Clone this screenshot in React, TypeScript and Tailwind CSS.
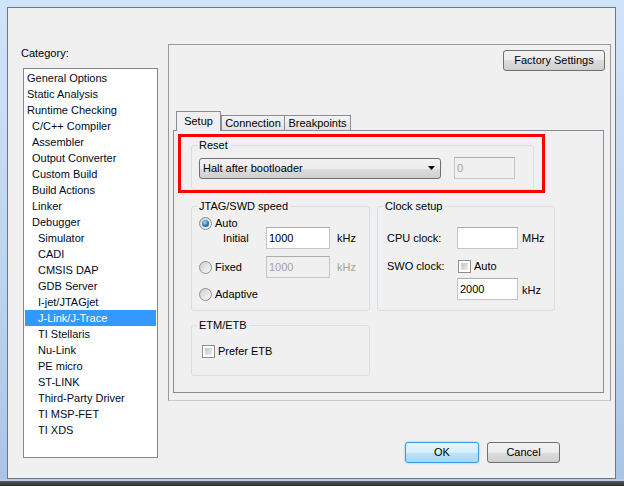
import * as React from "react";

type Item = { label: string; level: number; selected?: boolean };

const ITEMS: Item[] = [
  { label: "General Options", level: 0 },
  { label: "Static Analysis", level: 0 },
  { label: "Runtime Checking", level: 0 },
  { label: "C/C++ Compiler", level: 1 },
  { label: "Assembler", level: 1 },
  { label: "Output Converter", level: 1 },
  { label: "Custom Build", level: 1 },
  { label: "Build Actions", level: 1 },
  { label: "Linker", level: 1 },
  { label: "Debugger", level: 1 },
  { label: "Simulator", level: 2 },
  { label: "CADI", level: 2 },
  { label: "CMSIS DAP", level: 2 },
  { label: "GDB Server", level: 2 },
  { label: "I-jet/JTAGjet", level: 2 },
  { label: "J-Link/J-Trace", level: 2, selected: true },
  { label: "TI Stellaris", level: 2 },
  { label: "Nu-Link", level: 2 },
  { label: "PE micro", level: 2 },
  { label: "ST-LINK", level: 2 },
  { label: "Third-Party Driver", level: 2 },
  { label: "TI MSP-FET", level: 2 },
  { label: "TI XDS", level: 2 },
];

const INDENT = ["pl-[2px]", "pl-[7px]", "pl-[13px]"];

function Radio({ checked }: { checked?: boolean }) {
  return (
    <span className="flex h-[13px] w-[13px] shrink-0 items-center justify-center rounded-full border border-[#8e8f8f] bg-[linear-gradient(135deg,#cfcfcf,#fafafa)]">
      {checked && (
        <span className="h-[7px] w-[7px] rounded-full bg-[radial-gradient(circle_at_40%_35%,#a6dcf8,#2a76b4_55%,#0f3f6e)]" />
      )}
    </span>
  );
}

function Check() {
  return (
    <span className="block h-[13px] w-[13px] shrink-0 border border-[#8e8f8f] bg-white p-[2px]">
      <span className="block h-full w-full bg-[linear-gradient(135deg,#c4c4c4,#efefef)]" />
    </span>
  );
}

function TextBox({ value, disabled, w }: { value: string; disabled?: boolean; w: string }) {
  return (
    <div
      className={`${w} flex h-[22px] shrink-0 items-center border border-[#c2c5cc] border-t-[#abadb3] pl-[2px] ${
        disabled ? "bg-[#f0f0f0] text-[#a6a29a]" : "bg-white text-black"
      }`}
    >
      {value}
    </div>
  );
}

function Button({ label, w, primary }: { label: string; w: string; primary?: boolean }) {
  return (
    <div
      className={`${w} flex h-[21px] items-center justify-center rounded-[3px] border ${
        primary
          ? "border-[#3c9ad9] bg-[linear-gradient(180deg,#e6f4fc_0%,#d6eefb_50%,#bde3f8_50%,#a9d7f2_100%)] shadow-[0_0_2px_#6cc3f5]"
          : "border-[#707070] bg-[linear-gradient(180deg,#f2f2f2_0%,#ebebeb_50%,#dddddd_50%,#cfcfcf_100%)]"
      }`}
    >
      {label}
    </div>
  );
}

export default function App() {
  return (
    <div className="flex h-[486px] w-[624px] flex-col overflow-hidden bg-[linear-gradient(180deg,#d2e4f7_0%,#bcd3ed_60%,#a9c4e4_100%)] font-['Liberation_Sans',Arial,sans-serif] text-[11px] leading-[13px] text-black">
      <div className="pl-[7px] pt-[7px]">
        {/* dialog */}
        <div className="flex h-[472px] w-[609px] border border-[#6b7785] bg-[#f0f0f0]">
          {/* category column */}
          <div className="ml-[15px] mt-[39px] flex w-[135px] flex-col">
            <div className="-ml-[2px] h-[13px]">Category:</div>
            <div className="mt-[8px] h-[390px] border border-[#828790] bg-white pt-[1px]">
              {ITEMS.map((it) => (
                <div
                  key={it.label}
                  className={`mx-[1px] h-[16px] leading-[16px] ${INDENT[it.level]} ${
                    it.selected ? "bg-[#3399ff] text-white" : "text-[#000a1e]"
                  }`}
                >
                  {it.label}
                </div>
              ))}
            </div>
          </div>

          {/* right column */}
          <div className="ml-[10px] mt-[36px] flex flex-col">
            <div className="flex h-[357px] w-[443px] flex-col border border-[#9a9a9a] border-b-[#c8c8c8]">
              <div className="mr-[5px] mt-[5px] flex justify-end">
                <Button label="Factory Settings" w="w-[102px]" />
              </div>

              {/* tabs */}
              <div className="ml-[7px] mt-[40px] flex h-[19px] items-end">
                <div className="relative z-10 -mb-[1px] flex h-[20px] w-[45px] items-start justify-center border border-b-0 border-[#898c95] bg-[#f0f0f0] pt-[3px]">
                  Setup
                </div>
                <div className="flex h-[15px] w-[64px] items-center justify-center border border-b-0 border-[#898c95] bg-[linear-gradient(180deg,#f4f4f4,#e2e2e2)] pt-[1px]">
                  Connection
                </div>
                <div className="flex h-[15px] w-[66px] items-center justify-center border border-b-0 border-l-0 border-[#898c95] bg-[linear-gradient(180deg,#f4f4f4,#e2e2e2)] pt-[1px]">
                  Breakpoints
                </div>
              </div>

              {/* tab page */}
              <div className="relative ml-[4px] h-[263px] w-[431px] border border-[#898c95] bg-[#f0f0f0]">
                <div className="ml-[17px] mt-[8px] flex w-[343px] flex-col">
                  <fieldset className="rounded-[3px] border border-[#d5dfe5] pb-[10px] pl-[7px] pt-[5px]">
                    <legend className="-ml-[2px] px-[2px]">Reset</legend>
                    <div className="flex items-center">
                      <div className="flex h-[21px] w-[242px] items-center justify-between rounded-[3px] border border-[#707070] bg-[linear-gradient(180deg,#f2f2f2_0%,#ebebeb_50%,#dddddd_50%,#cfcfcf_100%)] pl-[3px] pr-[5px]">
                        <span>Halt after bootloader</span>
                        <svg width="7" height="4" viewBox="0 0 7 4">
                          <path d="M0 0h7L3.5 4z" fill="#000" />
                        </svg>
                      </div>
                      <div className="ml-[13px]">
                        <TextBox value="0" disabled w="w-[61px]" />
                      </div>
                    </div>
                  </fieldset>

                  <div className="mt-[10px] flex">
                    <fieldset className="w-[179px] shrink-0 rounded-[3px] border border-[#d5dfe5] pb-[8px] pl-[7px] pt-[4px]">
                      <legend className="-ml-[2px] px-[2px]">JTAG/SWD speed</legend>
                      <div className="flex h-[13px] items-center gap-[3px]">
                        <Radio checked />
                        <span>Auto</span>
                      </div>
                      <div className="-mt-[3px] flex items-center">
                        <span className="w-[67px] pl-[24px]">Initial</span>
                        <TextBox value="1000" w="w-[64px]" />
                        <span className="ml-[7px]">kHz</span>
                      </div>
                      <div className="mt-[7px] flex items-center">
                        <span className="flex w-[67px] items-center gap-[3px]">
                          <Radio />
                          <span>Fixed</span>
                        </span>
                        <TextBox value="1000" disabled w="w-[64px]" />
                        <span className="ml-[7px] text-[#a0a0a0]">kHz</span>
                      </div>
                      <div className="mt-[8px] flex h-[16px] items-center gap-[3px]">
                        <Radio />
                        <span>Adaptive</span>
                      </div>
                    </fieldset>

                    <fieldset className="ml-[7px] w-[178px] shrink-0 rounded-[3px] border border-[#d5dfe5] pl-[9px] pt-[14px]">
                      <legend className="-ml-[4px] px-[2px]">Clock setup</legend>
                      <div className="flex items-center">
                        <span className="w-[70px]">CPU clock:</span>
                        <TextBox value="" w="w-[61px]" />
                        <span className="ml-[4px]">MHz</span>
                      </div>
                      <div className="mt-[11px] flex h-[13px] items-center">
                        <span className="w-[71px]">SWO clock:</span>
                        <Check />
                        <span className="ml-[3px]">Auto</span>
                      </div>
                      <div className="mt-[5px] flex items-center pl-[70px]">
                        <TextBox value="2000" w="w-[61px]" />
                        <span className="ml-[4px] mt-[3px]">kHz</span>
                      </div>
                    </fieldset>
                  </div>

                  <fieldset className="mt-[8px] w-[179px] rounded-[3px] border border-[#d5dfe5] pb-[17px] pl-[10px] pt-[13px]">
                    <legend className="-ml-[5px] px-[2px]">ETM/ETB</legend>
                    <div className="flex h-[13px] items-center">
                      <Check />
                      <span className="ml-[3px]">Prefer ETB</span>
                    </div>
                  </fieldset>
                </div>

                {/* highlight */}
                <div className="absolute left-[4px] top-[3px] h-[59px] w-[367px] border-[3px] border-[#ff0000]" />
              </div>
            </div>

            <div className="mt-[41px] flex justify-end gap-[8px] pr-[51px]">
              <Button label="OK" w="w-[74px]" primary />
              <Button label="Cancel" w="w-[73px]" />
            </div>
          </div>
        </div>
      </div>
      <div className="h-[2px] bg-[#b7cde6]" />
      <div className="h-[5px] bg-[linear-gradient(180deg,#5a5a5a,#2e2e2e)]" />
    </div>
  );
}
